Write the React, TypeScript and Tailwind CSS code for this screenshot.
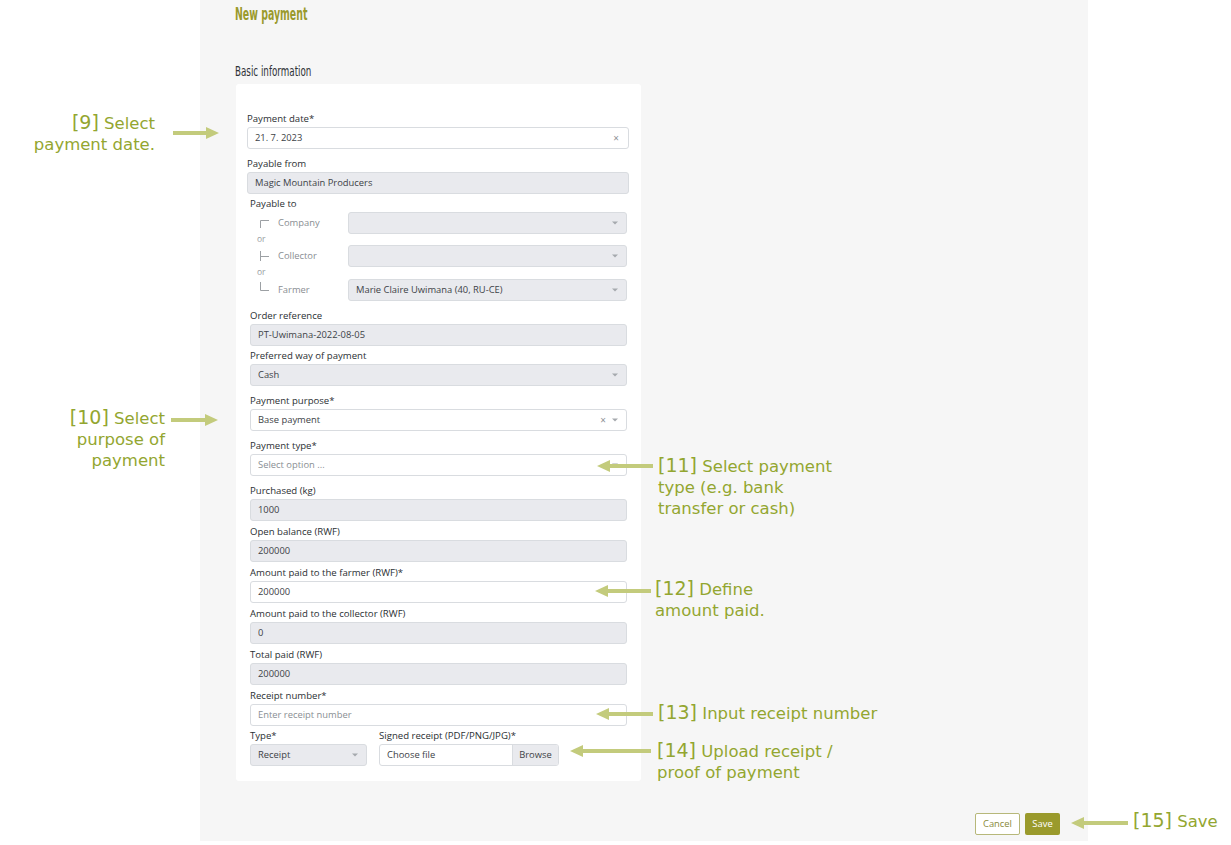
import React from 'react';

const ANNOT = 'text-[#93a630] text-[16.5px] leading-[21px]';
const NUM = 'text-[19px]';

function Arrow({ dir, width }: { dir: 'left' | 'right'; width: number }) {
  return (
    <svg width={width} height={12} viewBox={`0 0 ${width} 12`}>
      {dir === 'right' ? (
        <>
          <rect x={0} y={4} width={width - 12} height={4} fill="#c3cb7c" />
          <polygon points={`${width - 13},0 ${width},6 ${width - 13},12`} fill="#c3cb7c" />
        </>
      ) : (
        <>
          <rect x={12} y={4} width={width - 12} height={4} fill="#c3cb7c" />
          <polygon points="13,0 0,6 13,12" fill="#c3cb7c" />
        </>
      )}
    </svg>
  );
}

function Caret() {
  return (
    <svg width={6} height={4} viewBox="0 0 6 4" className="shrink-0">
      <polygon points="0,0.5 6,0.5 3,3.5" fill="#a5a9ae" />
    </svg>
  );
}

function Label({ children }: { children: React.ReactNode }) {
  return <div className="h-[12px] leading-[12px] text-[9.6px] text-[#2b2f33] mb-[2px]">{children}</div>;
}

function Box({
  value,
  disabled,
  placeholder,
  select,
  clear,
  className = '',
}: {
  value?: string;
  disabled?: boolean;
  placeholder?: boolean;
  select?: boolean;
  clear?: boolean;
  className?: string;
}) {
  return (
    <div
      className={
        'h-[22px] flex items-center rounded-[3px] border border-[#d9dce0] pl-[7px] pr-[8px] text-[9.4px] ' +
        (disabled ? 'bg-[#e9eaee] ' : 'bg-white ') +
        (placeholder ? 'text-[#8a8f94] ' : 'text-[#3d4247] ') +
        className
      }
    >
      <span className="flex-1 truncate">{value}</span>
      {clear && <span className="text-[10px] text-[#8d9196] mr-[6px] leading-none">×</span>}
      {select && <Caret />}
    </div>
  );
}

function TreeLine({ kind }: { kind: 'top' | 'mid' | 'bottom' }) {
  return (
    <svg width={14} height={22} viewBox="0 0 14 22" className="shrink-0">
      {kind === 'top' && <path d="M2.5 16 V8.5 H11" stroke="#9ca0a4" strokeWidth={1} fill="none" />}
      {kind === 'mid' && <path d="M2.5 6 V16 M2.5 11.5 H11" stroke="#9ca0a4" strokeWidth={1} fill="none" />}
      {kind === 'bottom' && <path d="M2.5 3 V11.5 H11" stroke="#9ca0a4" strokeWidth={1} fill="none" />}
    </svg>
  );
}

function PayeeRow({ kind, label, value }: { kind: 'top' | 'mid' | 'bottom'; label: string; value?: string }) {
  return (
    <div className="flex items-center h-[22px]">
      <div className="w-[8px]" />
      <TreeLine kind={kind} />
      <div className="w-[76px] pl-[6px] text-[9.4px] text-[#8a8e93]">{label}</div>
      <Box value={value} disabled select className="flex-1" />
    </div>
  );
}

function Or() {
  return <div className="h-[11px] leading-[9px] pl-[7px] text-[8.5px] text-[#9a9ea2]">or</div>;
}

export default function App() {
  return (
    <div
      className="relative w-[1231px] h-[845px] bg-white flex overflow-hidden"
      style={{ fontFamily: '"Open Sans", "Noto Sans", sans-serif' }}
    >
      <div className="w-[200px] shrink-0" />

      {/* Main panel */}
      <div className="w-[888px] h-[841px] bg-[#f6f6f6] pl-[35px] pr-[28px] flex flex-col">
        <h1
          className="mt-[4px] text-[18px] leading-[20px] font-bold text-[#9a9a2c]"
          style={{ fontFamily: '"DejaVu Sans Condensed", "Liberation Sans Narrow", sans-serif', transform: 'scaleX(0.58)', transformOrigin: 'left' }}
        >
          New payment
        </h1>
        <h2
          className="mt-[40px] text-[13.5px] leading-[15px] text-[#2f3236]"
          style={{ fontFamily: '"DejaVu Sans Condensed", "Liberation Sans Narrow", sans-serif', transform: 'scaleX(0.72)', transformOrigin: 'left' }}
        >
          Basic information
        </h2>

        {/* Card */}
        <div className="mt-[5px] ml-[1px] w-[405px] h-[697px] bg-white rounded-[3px] pt-[29px] pl-[11px] pr-[12px]">
          <Label>Payment date*</Label>
          <Box value="21. 7. 2023" clear className="!pr-[3px]" />
          <div className="h-[9px]" />
          <Label>Payable from</Label>
          <Box value="Magic Mountain Producers" disabled />

          <div className="pl-[3px] pr-[2px]">
            <div className="h-[4px]" />
            <Label>Payable to</Label>
            <PayeeRow kind="top" label="Company" />
            <Or />
            <PayeeRow kind="mid" label="Collector" />
            <Or />
            <div className="h-[1px]" />
            <PayeeRow kind="bottom" label="Farmer" value="Marie Claire Uwimana (40, RU-CE)" />
            <div className="h-[9px]" />

            <Label>Order reference</Label>
            <Box value="PT-Uwimana-2022-08-05" disabled />
            <div className="h-[4px]" />
            <Label>Preferred way of payment</Label>
            <Box value="Cash" disabled select />
            <div className="h-[9px]" />
            <Label>Payment purpose*</Label>
            <Box value="Base payment" select clear />
            <div className="h-[9px]" />
            <Label>Payment type*</Label>
            <Box value="Select option ..." placeholder select />
            <div className="h-[9px]" />
            <Label>Purchased (kg)</Label>
            <Box value="1000" disabled />
            <div className="h-[5px]" />
            <Label>Open balance (RWF)</Label>
            <Box value="200000" disabled />
            <div className="h-[5px]" />
            <Label>Amount paid to the farmer (RWF)*</Label>
            <Box value="200000" />
            <div className="h-[5px]" />
            <Label>Amount paid to the collector (RWF)</Label>
            <Box value="0" disabled />
            <div className="h-[5px]" />
            <Label>Total paid (RWF)</Label>
            <Box value="200000" disabled />
            <div className="h-[5px]" />
            <Label>Receipt number*</Label>
            <Box value="Enter receipt number" placeholder />
            <div className="h-[4px]" />

            <div className="flex gap-[12px]">
              <div className="w-[117px]">
                <Label>Type*</Label>
                <Box value="Receipt" disabled select />
              </div>
              <div className="w-[180px]">
                <Label>Signed receipt (PDF/PNG/JPG)*</Label>
                <div className="h-[22px] flex rounded-[3px] border border-[#d9dce0] bg-white text-[9.4px] text-[#3d4247] overflow-hidden">
                  <span className="flex-1 flex items-center pl-[7px]">Choose file</span>
                  <span className="w-[46px] flex items-center justify-center bg-[#e9eaee] border-l border-[#d9dce0]">Browse</span>
                </div>
              </div>
            </div>
          </div>
        </div>

        {/* Footer buttons */}
        <div className="mt-[32px] flex justify-end gap-[5px]">
          <button className="h-[22px] w-[45px] rounded-[2px] border border-[#b7b87a] bg-white text-[9.4px] text-[#8a8a3a]">
            Cancel
          </button>
          <button className="h-[22px] w-[35px] rounded-[2px] bg-[#9a9a2c] text-[9.4px] text-white">Save</button>
        </div>
      </div>

      {/* Annotations */}
      <div className="absolute left-0 top-[112px] w-[155px] text-right" style={{ fontFamily: '"DejaVu Sans", sans-serif' }}>
        <div className={ANNOT}>
          <span className={NUM}>[9]</span> Select
        </div>
        <div className={ANNOT}>payment date.</div>
      </div>
      <div className="absolute left-[173px] top-[127px]">
        <Arrow dir="right" width={46} />
      </div>

      <div className="absolute left-0 top-[407px] w-[165px] text-right" style={{ fontFamily: '"DejaVu Sans", sans-serif' }}>
        <div className={ANNOT}>
          <span className={NUM}>[10]</span> Select
        </div>
        <div className={ANNOT}>purpose of</div>
        <div className={ANNOT}>payment</div>
      </div>
      <div className="absolute left-[171px] top-[414px]">
        <Arrow dir="right" width={47} />
      </div>

      <div className="absolute left-[597px] top-[460px]">
        <Arrow dir="left" width={56} />
      </div>
      <div className="absolute left-[658px] top-[455px]" style={{ fontFamily: '"DejaVu Sans", sans-serif' }}>
        <div className={ANNOT}>
          <span className={NUM}>[11]</span> Select payment
        </div>
        <div className={ANNOT}>type (e.g. bank</div>
        <div className={ANNOT}>transfer or cash)</div>
      </div>

      <div className="absolute left-[595px] top-[585px]">
        <Arrow dir="left" width={56} />
      </div>
      <div className="absolute left-[655px] top-[578px]" style={{ fontFamily: '"DejaVu Sans", sans-serif' }}>
        <div className={ANNOT}>
          <span className={NUM}>[12]</span> Define
        </div>
        <div className={ANNOT}>amount paid.</div>
      </div>

      <div className="absolute left-[596px] top-[708px]">
        <Arrow dir="left" width={57} />
      </div>
      <div className="absolute left-[658px] top-[702px]" style={{ fontFamily: '"DejaVu Sans", sans-serif' }}>
        <div className={ANNOT}>
          <span className={NUM}>[13]</span> Input receipt number
        </div>
      </div>

      <div className="absolute left-[570px] top-[745px]">
        <Arrow dir="left" width={81} />
      </div>
      <div className="absolute left-[657px] top-[740px]" style={{ fontFamily: '"DejaVu Sans", sans-serif' }}>
        <div className={ANNOT}>
          <span className={NUM}>[14]</span> Upload receipt /
        </div>
        <div className={ANNOT}>proof of payment</div>
      </div>

      <div className="absolute left-[1071px] top-[817px]">
        <Arrow dir="left" width={57} />
      </div>
      <div className="absolute left-[1133px] top-[810px]" style={{ fontFamily: '"DejaVu Sans", sans-serif' }}>
        <div className={ANNOT}>
          <span className={NUM}>[15]</span> Save
        </div>
      </div>
    </div>
  );
}
